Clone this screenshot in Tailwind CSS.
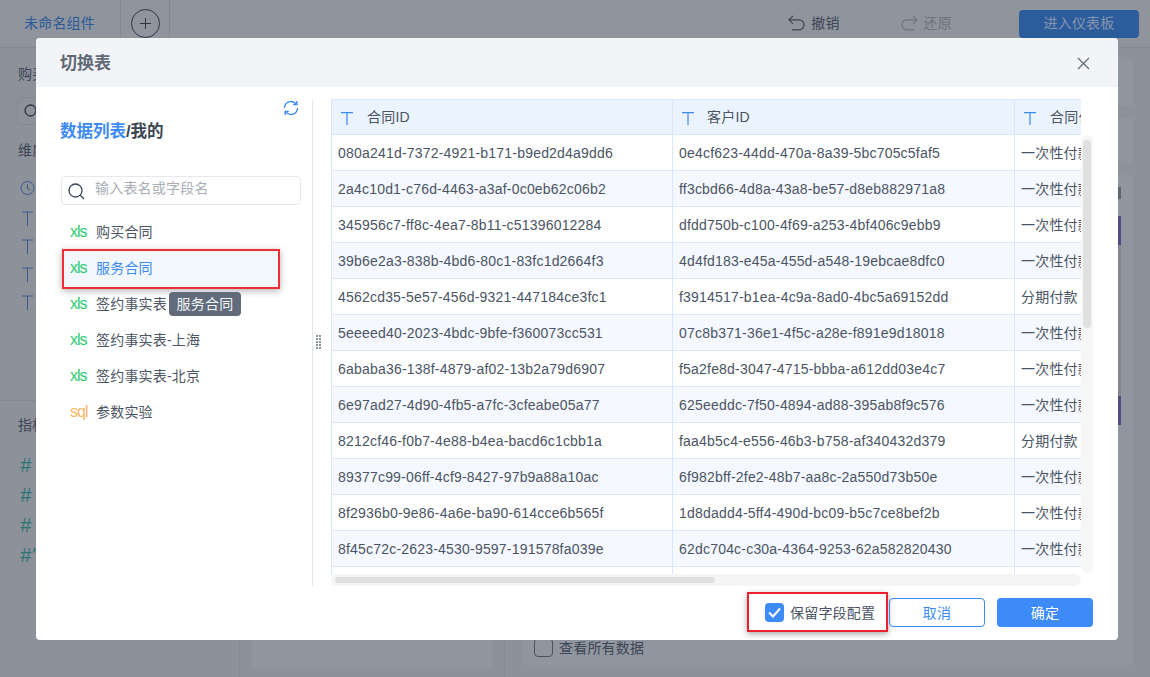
<!DOCTYPE html>
<html lang="zh-CN">
<head>
  <meta charset="UTF-8" />
  <title>切换表</title>
  <script src="https://cdn.jsdelivr.net/npm/@tailwindcss/browser@4"></script>
</head>
<body class="w-[1150px] h-[677px] overflow-hidden relative bg-[#8c919a] text-[14px] leading-[20px] tracking-[0.2px] text-[#3c4553] font-['Liberation_Sans','Noto_Sans_CJK_SC',sans-serif]">

  <!-- page behind the dialog -->
  <div class="flex flex-col h-full">
    <div class="h-12 shrink-0 flex items-center border-b border-[#83898f] bg-[#8f949d]">
      <div class="w-[121px] h-full flex items-center pl-6 pb-[2px] border-r border-[#83898f] text-[#2b5a9b]">未命名组件</div>
      <div class="w-[49px] h-full flex items-center justify-center border-r border-[#83898f]">
        <div class="w-[29px] h-[29px] rounded-full border border-[#2f3747] flex items-center justify-center">
          <svg width="13" height="13" viewBox="0 0 13 13" fill="none" stroke="#2f3747"><path d="M6.500 1v11M1 6.500h11"/></svg>
        </div>
      </div>
      <div class="flex-1"></div>
      <div class="flex items-center gap-[6px] mr-[61px] mb-[2px]">
        <svg width="17" height="16" viewBox="0 0 17 16" fill="none" stroke="#3c4553" stroke-width="1.200"><path d="M5 .8 1 4.800l4 4M1 4.800h10a5 5 0 0 1 0 10H4"/></svg>
        撤销
      </div>
      <div class="flex items-center gap-[6px] mr-[67px] mb-[2px] text-[#6e747d]">
        <svg width="17" height="16" viewBox="0 0 17 16" fill="none" stroke="#6e747d" stroke-width="1.200"><path d="m12 .8 4 4-4 4M16 4.800H6a5 5 0 0 0 0 10h7"/></svg>
        还原
      </div>
      <div class="w-[120px] h-7 mr-[11px] pb-px bg-[#2c5c9c] rounded-sm flex items-center justify-center text-[#8796ad]">进入仪表板</div>
    </div>

    <div class="flex-1 flex min-h-0">
      <div class="w-[240px] shrink-0 border-r border-[#83898f] pt-4">
        <div class="pl-[18px]">购买合同</div>
        <div class="ml-[17px] mt-[13px] h-7 w-[200px] border border-[#83898f] rounded-sm flex items-center pl-1.5">
          <svg width="14" height="14" viewBox="0 0 14 14" fill="none" stroke="#2f3747" stroke-width="1.300"><circle cx="6.500" cy="6.500" r="5.500"/></svg>
        </div>
        <div class="pl-[18px] mt-[15px]">维度</div>
        <div class="pl-5 mt-[18px] flex flex-col gap-[7px]">
          <svg width="15" height="21" viewBox="0 0 15 21" fill="none" stroke="#3e5a8c"><circle cx="7.500" cy="10" r="6.500"/><path d="M7.500 6v4.500l3 1.500"/></svg>
          <svg class="mt-[2px]" width="15" height="21" viewBox="0 0 15 21" fill="none" stroke="#3e5a8c"><path d="M2 4h11M7.500 4v14"/></svg>
          <svg width="15" height="21" viewBox="0 0 15 21" fill="none" stroke="#3e5a8c"><path d="M2 4h11M7.500 4v14"/></svg>
          <svg width="15" height="21" viewBox="0 0 15 21" fill="none" stroke="#3e5a8c"><path d="M2 4h11M7.500 4v14"/></svg>
          <svg width="15" height="21" viewBox="0 0 15 21" fill="none" stroke="#3e5a8c"><path d="M2 4h11M7.500 4v14"/></svg>
        </div>
        <div class="border-t border-[#83898f] mt-[87px] pt-[14px] pl-[18px]">指标</div>
        <div class="mt-5 flex flex-col gap-[10px] text-[#2f7377] text-[20px] leading-[20px] italic pl-5">
          <div>#</div><div>#</div><div>#</div><div>#'</div>
        </div>
      </div>
      <div class="w-[265px] shrink-0 border-r border-[#83898f] pl-3 pb-[9px] flex flex-col justify-end">
        <div class="w-[240px] h-[30px] bg-[#90969f]"></div>
      </div>
      <div class="flex-1 pl-[17px] pr-[17px] pt-[11px] pb-3 flex flex-col gap-3">
        <div class="h-[47px] shrink-0 bg-[#90969f]"></div>
        <div class="h-[45px] shrink-0 bg-[#90969f]"></div>
        <div class="flex-1 bg-[#90969f] pt-3 flex flex-col">
          <div class="w-[599px] h-3 bg-[#5f656d]"></div>
          <div class="w-[599px] h-[29px] mt-[17px] bg-[#4f4a80]"></div>
          <div class="w-[599px] h-[151px] bg-[#85848f]"></div>
          <div class="w-[599px] h-[29px] bg-[#4f4a80]"></div>
          <div class="flex-1"></div>
          <div class="h-[27px] flex items-start gap-[6px] pl-3">
            <div class="w-[19px] h-[19px] border border-[#4d535d] rounded-sm"></div>
            查看所有数据
          </div>
        </div>
      </div>
    </div>
  </div>

  <!-- dialog -->
  <div class="absolute left-[36px] top-[38px] w-[1082px] h-[602px] bg-white rounded-sm flex flex-col">
    <div class="h-[49px] shrink-0 bg-[#f3f4f8] rounded-t-sm flex items-center justify-between pl-6 pr-[28px] pt-[2px]">
      <span class="text-[17px] tracking-normal font-bold text-[#5f6875]">切换表</span>
      <svg width="13" height="13" viewBox="0 0 13 13" fill="none" stroke="#5f6b7c" stroke-width="1.200"><path d="m1 1 11 11M12 1 1 12"/></svg>
    </div>

    <div class="flex-1 flex min-h-0 pt-3">
      <!-- table list -->
      <div class="w-[277px] h-[487px] shrink-0 border-r border-[#e6e8ec] relative pl-[25px]">
        <svg class="absolute left-[247px] top-[1px]" width="16" height="16" viewBox="0 0 16 16" fill="none" stroke="#3d8bf2" stroke-width="1.400"><path d="M1.500 8A6.500 6.500 0 0 1 13.300 4.300M14.500 8A6.500 6.500 0 0 1 2.700 11.700"/><path d="M13.800 1v3.600h-3.600M2.200 15v-3.600h3.600"/></svg>
        <div class="mt-5 text-[16.5px] tracking-normal leading-6 font-bold -ml-px"><span class="text-[#3d8bf2]">数据列表</span>/我的</div>
        <div class="mt-[33px] h-[29px] w-[240px] border border-[#e6e8ec] rounded-sm flex items-center pl-1.5 pb-[5px] relative">
          <svg class="absolute left-[6px] top-[6px]" width="17" height="17" viewBox="0 0 17 17" fill="none" stroke="#3c4658" stroke-width="1.300"><circle cx="7.500" cy="7.500" r="6.500"/><path d="m12 12 4 4"/></svg>
          <span class="ml-[27px] text-[#a8adb5]">输入表名或字段名</span>
        </div>
        <ul class="mt-[10px] ml-[3px] w-[214px] text-[#4b5563]">
          <li class="h-9 flex items-center pl-1.5 pb-[2px]"><span class="w-[26px] text-[16px] tracking-[-1px] text-[#2ecc71]">xls</span>购买合同</li>
          <li class="h-9 flex items-center pl-1.5 pb-[2px] bg-[#f2f7fe] text-[#3d8bf2] outline-2 outline-[#ee2f35] shadow-[0_2px_7px_2px_rgba(0,0,0,.3)]"><span class="w-[26px] text-[16px] tracking-[-1px] text-[#2ecc71]">xls</span>服务合同</li>
          <li class="h-9 flex items-center pl-1.5 pb-[2px] relative"><span class="w-[26px] text-[16px] tracking-[-1px] text-[#2ecc71]">xls</span>签约事实表
            <span class="absolute left-[105px] top-[5px] h-6 w-[72px] rounded-sm bg-[#616b7c] text-[#f4f5f7] flex items-center justify-center">服务合同</span>
          </li>
          <li class="h-9 flex items-center pl-1.5 pb-[2px]"><span class="w-[26px] text-[16px] tracking-[-1px] text-[#2ecc71]">xls</span>签约事实表-上海</li>
          <li class="h-9 flex items-center pl-1.5 pb-[2px]"><span class="w-[26px] text-[16px] tracking-[-1px] text-[#2ecc71]">xls</span>签约事实表-北京</li>
          <li class="h-9 flex items-center pl-1.5 pb-[2px]"><span class="w-[26px] text-[16px] tracking-[-1px] text-[#f9b868]">sql</span>参数实验</li>
        </ul>
        <svg class="absolute left-[280px] top-[236px]" width="6" height="15" fill="#8d939d">
          <defs><pattern id="dots" width="3" height="3" patternUnits="userSpaceOnUse"><rect width="2" height="2"/></pattern></defs>
          <rect width="6" height="15" fill="url(#dots)"/>
        </svg>
      </div>

      <!-- preview table -->
      <div class="ml-[18px] grid grid-cols-[750px_12px] grid-rows-[475px_12px]">
        <div class="overflow-hidden">
          <div id="grid" class="w-[1100px] grid grid-cols-[341px_342px_1fr] text-[#4a5464] border-l border-[#d6e6fb]">
            <div class="h-9 bg-[#ebf3fe] border-y border-r border-[#dbe8fb] flex items-center pl-[9px]">
              <svg class="mt-[3px]" width="12" height="13" viewBox="0 0 12 13" fill="none" stroke="#3d8bf2" stroke-width="1.200"><path d="M0 .6h12M6 .6V13"/></svg>
              <span class="ml-[14px]">合同ID</span>
            </div>
            <div class="h-9 bg-[#ebf3fe] border-y border-r border-[#dbe8fb] flex items-center pl-[9px]">
              <svg class="mt-[3px]" width="12" height="13" viewBox="0 0 12 13" fill="none" stroke="#3d8bf2" stroke-width="1.200"><path d="M0 .6h12M6 .6V13"/></svg>
              <span class="ml-[13px]">客户ID</span>
            </div>
            <div class="h-9 bg-[#ebf3fe] border-y border-r border-[#dbe8fb] flex items-center pl-[9px] whitespace-nowrap">
              <svg class="mt-[3px]" width="12" height="13" viewBox="0 0 12 13" fill="none" stroke="#3d8bf2" stroke-width="1.200"><path d="M0 .6h12M6 .6V13"/></svg>
              <span class="ml-[14px]">合同付款类型</span>
            </div>
          </div>
        </div>
        <!-- vertical scrollbar -->
        <div class="mt-9 h-[438px] rounded-md bg-[#f6f6f6] pt-[5px] px-[2px]">
          <div class="h-[188px] rounded bg-[#e0e0e0]"></div>
        </div>
        <!-- horizontal scrollbar -->
        <div class="h-3 rounded-md bg-[#f5f5f5] pl-1 py-[3px]">
          <div class="w-[380px] h-full rounded bg-[#e0e0e0]"></div>
        </div>
      </div>
    </div>

    <div class="h-[54px] shrink-0 flex justify-end items-start pt-[6px] pr-[25px]">
      <label class="w-[141px] h-10 border-2 border-[#ee2030] shadow-[0_2px_6px_rgba(0,0,0,.35)] flex items-center pl-4 gap-[6px] text-[#4a5464]">
        <span class="w-[19px] h-[19px] rounded-sm bg-[#3d8bf9] flex items-center justify-center">
          <svg width="13" height="11" viewBox="0 0 13 11" fill="none" stroke="#fff" stroke-width="2"><path d="m1 5.500 4 4 7-8"/></svg>
        </span>
        <span class="pt-px">保留字段配置</span>
      </label>
      <button class="ml-px mt-[6px] w-24 h-[29px] rounded-sm border border-[#3d8bf2] text-[#3d8bf2]">取消</button>
      <button class="ml-3 mt-[6px] w-24 h-[29px] rounded-sm bg-[#3d8bf9] text-white">确定</button>
    </div>
  </div>

  <script>
    const rows = [
      ["080a241d-7372-4921-b171-b9ed2d4a9dd6","0e4cf623-44dd-470a-8a39-5bc705c5faf5","一次性付款"],
      ["2a4c10d1-c76d-4463-a3af-0c0eb62c06b2","ff3cbd66-4d8a-43a8-be57-d8eb882971a8","一次性付款"],
      ["345956c7-ff8c-4ea7-8b11-c51396012284","dfdd750b-c100-4f69-a253-4bf406c9ebb9","一次性付款"],
      ["39b6e2a3-838b-4bd6-80c1-83fc1d2664f3","4d4fd183-e45a-455d-a548-19ebcae8dfc0","一次性付款"],
      ["4562cd35-5e57-456d-9321-447184ce3fc1","f3914517-b1ea-4c9a-8ad0-4bc5a69152dd","分期付款"],
      ["5eeeed40-2023-4bdc-9bfe-f360073cc531","07c8b371-36e1-4f5c-a28e-f891e9d18018","一次性付款"],
      ["6ababa36-138f-4879-af02-13b2a79d6907","f5a2fe8d-3047-4715-bbba-a612dd03e4c7","一次性付款"],
      ["6e97ad27-4d90-4fb5-a7fc-3cfeabe05a77","625eeddc-7f50-4894-ad88-395ab8f9c576","一次性付款"],
      ["8212cf46-f0b7-4e88-b4ea-bacd6c1cbb1a","faa4b5c4-e556-46b3-b758-af340432d379","分期付款"],
      ["89377c99-06ff-4cf9-8427-97b9a88a10ac","6f982bff-2fe2-48b7-aa8c-2a550d73b50e","一次性付款"],
      ["8f2936b0-9e86-4a6e-ba90-614cce6b565f","1d8dadd4-5ff4-490d-bc09-b5c7ce8bef2b","一次性付款"],
      ["8f45c72c-2623-4530-9597-191578fa039e","62dc704c-c30a-4364-9253-62a582820430","一次性付款"],
      ["","",""]
    ];
    const grid = document.getElementById("grid");
    rows.forEach((r, i) => {
      r.forEach(text => {
        const cell = document.createElement("div");
        cell.className = "h-9 border-b border-r border-[#dbe8fb] flex items-center pl-1.5 pt-px whitespace-nowrap " + (i % 2 ? "bg-[#f5f8fe]" : "bg-white");
        cell.textContent = text;
        grid.appendChild(cell);
      });
    });
  </script>
</body>
</html>
